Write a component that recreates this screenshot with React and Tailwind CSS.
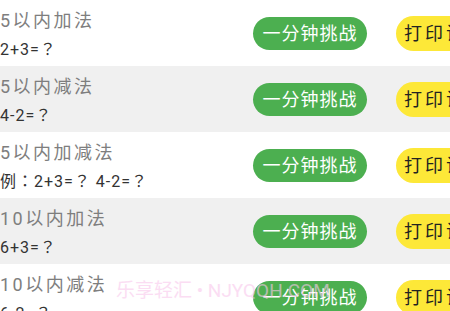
import React from 'react';

const items = [
    { title: '5以内加法', sample: '2+3=？' },
    { title: '5以内减法', sample: '4-2=？' },
    { title: '5以内加减法', sample: '例：2+3=？ 4-2=？' },
    { title: '10以内加法', sample: '6+3=？' },
    { title: '10以内减法', sample: '6-2=？' },
];

// centred full-width punctuation, as on the phone
const punct = { fontFamily: '"Noto Sans CJK TC", "Noto Sans CJK SC", sans-serif' };

const Sample = ({ text }) =>
    text.split(/([？：])/).map((part, i) =>
        part === '？' || part === '：' ? (
            <span key={i} style={punct}>{part}</span>
        ) : (
            <span key={i}>{part}</span>
        )
    );

const Row = ({ item, shaded }) => (
    <div className={`h-[66px] flex items-center ${shaded ? 'bg-[#f0f0f0]' : 'bg-white'}`}>
        <div className="w-[253px] shrink-0 self-start pt-[10px]">
            <div className="text-[18px] leading-[22px] tracking-[2.5px] text-[#7e7e7e]">{item.title}</div>
            <div className="mt-[5px] text-[16px] leading-[22px] tracking-[1px] text-[#333] whitespace-pre">
                <Sample text={item.sample} />
            </div>
        </div>
        <button className="w-[114px] h-[33px] shrink-0 rounded-full bg-[#4caf50] text-white text-[18px] tracking-[1px]">
            一分钟挑战
        </button>
        <button className="ml-[29px] w-[114px] h-[35px] shrink-0 rounded-full bg-[#fde838] text-[#222] text-[18px] tracking-[3px] text-left pl-[8px] whitespace-nowrap">
            打印试卷
        </button>
    </div>
);

export default function App() {
    return (
        <div
            className="relative w-[450px] h-[311px] overflow-hidden bg-white"
            style={{ fontFamily: 'Roboto, "Noto Sans CJK SC", sans-serif' }}
        >
            {items.map((item, i) => (
                <Row key={i} item={item} shaded={i % 2 === 1} />
            ))}
            <div className="absolute left-[116px] top-[279px] text-[19px] leading-[24px] text-[#f9c8ec] opacity-60 pointer-events-none whitespace-pre">
                乐享轻汇 • NJYQQH.COM
            </div>
        </div>
    );
}
